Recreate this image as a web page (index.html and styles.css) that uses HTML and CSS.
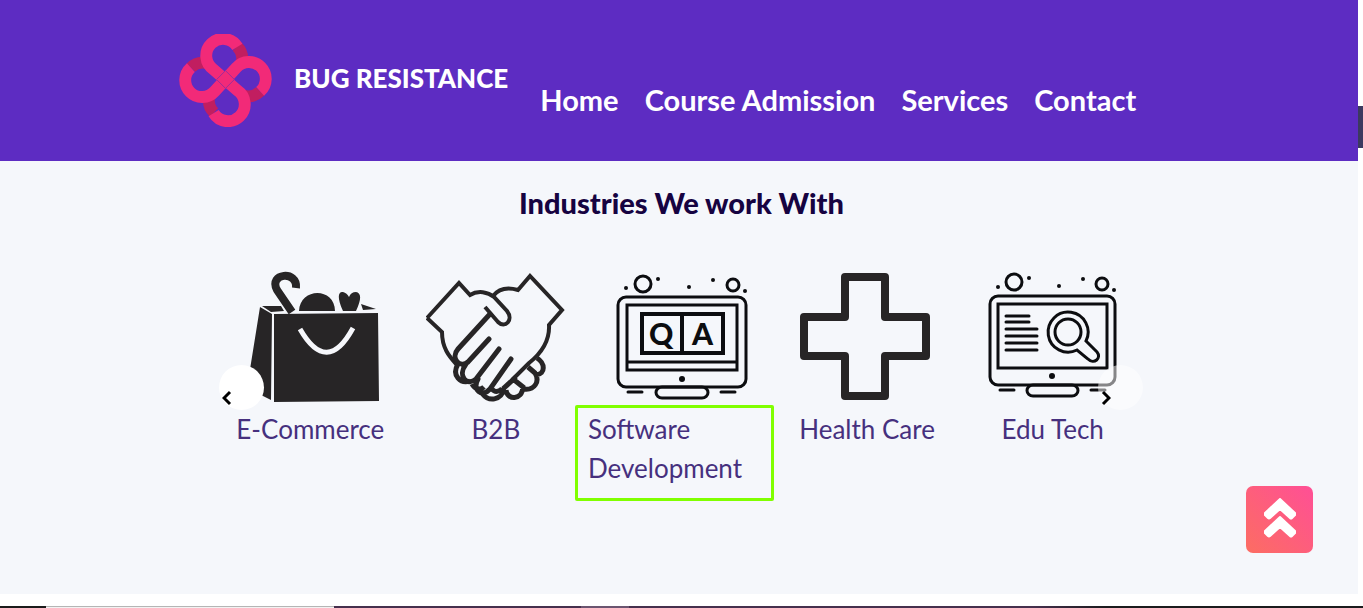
FILE: index.html
```html
<!DOCTYPE html>
<html lang="en">
<head>
<meta charset="utf-8">
<meta name="viewport" content="width=device-width, initial-scale=1">
<title>Bug Resistance</title>
<link rel="stylesheet" href="styles.css">
</head>
<body>
<div class="page">
  <header class="header">
    <div class="header-inner">
      <a class="brand" href="#">
        <svg class="brand-logo" viewBox="0 0 94 94" aria-hidden="true">
          <g fill="none" stroke-width="12">
            <path stroke="#c11e60" d="M58.5 12.5A17 17 0 0 1 63.5 28M35.5 79.5A17 17 0 0 1 30.5 64M12 34A17 17 0 0 1 28 29.5M82 58A17 17 0 0 1 66 62.5"/>
            <path stroke="#f22a78" d="M59 13A17 17 0 1 0 35 36L59 57A17 17 0 1 1 35 80"/>
            <path stroke="#f22a78" d="M82 58A17 17 0 1 0 58 34L36 58A17 17 0 1 1 12 34"/>
          </g>
          <path fill="none" stroke="#a02a9a" d="M38 46l9-9 9 9-9 9z"/>
        </svg>
        <span class="brand-name">BUG RESISTANCE</span>
      </a>
      <nav class="nav">
        <a href="#">Home</a>
        <a href="#">Course Admission</a>
        <a href="#">Services</a>
        <a href="#">Contact</a>
      </nav>
    </div>
  </header>

  <main class="industries">
    <h1 class="title">Industries We work With</h1>
    <div class="carousel">
      <ul class="slides">
        <li class="slide">
          <svg class="picture" viewBox="-4 -2 140 136" aria-hidden="true">
            <path fill="none" stroke="#272526" stroke-width="8" d="M48 39L33 17C24 0 54 -3 52 15"/>
            <path fill="#272526" d="M16 34l12 7-1 86L3 115zM18 33l19 0 3 5-13 1zM55 38C56 14 91 14 91 38zM99 38C92 23 95 18 99 19q4 1 6 5 2-5 7-5c5 1 6 6 0 19zM117 31l15 5-13 1zM30 41l104-1 1 88-105 1z"/>
            <path fill="none" stroke="#f6f7fb" stroke-width="5" d="M56 56Q83 103 109 55"/>
          </svg>
          <p class="label">E-Commerce</p>
        </li>
        <li class="slide">
          <svg class="picture" viewBox="2 -1 140 136" aria-hidden="true">
            <g fill="none" stroke="#272526" stroke-width="4">
              <path d="M3 46L35 11L46 23C54 18 64 20 70 25L83 39C90 48 81 57 74 50L61 35M69 24C76 15 87 16 94 18L106 4L138 38L125 53C126 71 115 83 105 91L88 108M3 46L18 60C18 77 26 85 33 93"/>
              <path stroke-width="5" stroke-linecap="round" d="M66 42L34 77C26 86 36 97 44 90L65 67M42 92C33 104 43 115 52 107L75 77M54 107C48 118 58 126 66 117L87 87"/>
              <path stroke-width="5" d="M34 92C27 104 37 112 46 109M48 112C51 118 57 118 60 115M57 119C63 132 79 128 80 116L92 105M82 118C83 128 98 129 99 115L89 107M99 117C111 119 116 109 111 101L104 95M112 103C122 102 121 91 113 86M68 117Q72 122 78 117"/>
            </g>
          </svg>
          <p class="label">B2B</p>
        </li>
        <li class="slide">
          <svg class="picture" viewBox="-3 -2 140 136" aria-hidden="true">
            <g fill="none" stroke="#0c0d10" stroke-width="3">
              <rect x="4" y="24" width="128" height="90" rx="8"/>
              <path d="M13 32h110v65H13zM13 89h110"/>
              <path stroke-width="4" d="M28 41h81v39H28zM68 41v39"/>
              <rect x="42" y="114" width="52" height="11" rx="6"/>
              <path stroke-linecap="round" d="M14 119h14M107 119h14"/>
              <circle cx="29" cy="11" r="8"/><circle cx="119" cy="12" r="6"/>
            </g>
            <g fill="#0c0d10"><circle cx="68" cy="106" r="3"/><circle cx="12" cy="15" r="2"/><circle cx="44" cy="6" r="2"/><circle cx="75" cy="14" r="2"/><circle cx="99" cy="7" r="2"/><circle cx="131" cy="18" r="2"/></g>
            <text class="qa" x="35" y="72">Q</text><text class="qa" x="78" y="72">A</text>
          </svg>
          <p class="label highlight">Software Development</p>
        </li>
        <li class="slide">
          <svg class="picture" viewBox="2 0 140 136" aria-hidden="true">
            <path fill="none" stroke="#272526" stroke-width="8" stroke-linejoin="round" d="M50 6h40v40h41v39H90v40H50V85H9V46h41z"/>
          </svg>
          <p class="label">Health Care</p>
        </li>
        <li class="slide">
          <svg class="picture" viewBox="2 -1 140 136" aria-hidden="true">
            <g fill="none" stroke="#0c0d10" stroke-width="3">
              <rect x="9" y="24" width="125" height="89" rx="8"/>
              <path d="M17 32h109v64H17z"/>
              <path stroke-linecap="round" d="M25 44h23M25 50h23M25 57h31M25 64h31M25 71h31M25 78h31M19 118h14M110 118h14"/>
              <path d="M96 78A20 20 0 1 1 105 69L116 80C121 86 113 93 107 87z"/>
              <circle cx="87" cy="60" r="13"/>
              <rect x="46" y="113" width="51" height="11" rx="6"/>
              <circle cx="33" cy="10" r="8"/><circle cx="121" cy="12" r="6"/>
            </g>
            <g fill="#0c0d10"><circle cx="71" cy="104" r="3"/><circle cx="17" cy="15" r="2"/><circle cx="48" cy="6" r="2"/><circle cx="78" cy="14" r="2"/><circle cx="102" cy="7" r="2"/><circle cx="133" cy="18" r="2"/></g>
          </svg>
          <p class="label">Edu Tech</p>
        </li>
      </ul>
      <button class="arrow arrow-prev" type="button" aria-label="Previous"><svg viewBox="0 0 10 16" aria-hidden="true"><path d="M8 2L2 8l6 6"/></svg></button>
      <button class="arrow arrow-next" type="button" aria-label="Next"><svg viewBox="0 0 10 16" aria-hidden="true"><path d="M2 2l6 6-6 6"/></svg></button>
    </div>
  </main>
  <div class="spacer"></div>
  <div class="strip"><span class="strip-start"></span><span class="strip-search"></span><span class="strip-tasks"></span><span class="strip-active"></span><span class="strip-tray"></span></div>

  <a class="to-top" href="#" aria-label="Back to top"><svg viewBox="0 0 32 40" aria-hidden="true"><path stroke-width="2" stroke="#fff" stroke-linejoin="round" d="M1 15L16 1l15 14q1 1 0 2l-3 3q-1 1-2 0L16 11 6 20q-1 1-2 0l-3-3q-1-1 0-2zM1 33l15-14 15 14q1 1 0 2l-3 3q-1 1-2 0L16 29 6 38q-1 1-2 0l-3-3q-1-1 0-2z"/></svg></a>
  <div class="scroll-track"><div class="scroll-thumb"></div></div>
</div>
</body>
</html>
```
FILE: styles.css
```css
* { box-sizing: border-box; }
body { margin: 0; font-family: Lato, "Open Sans", sans-serif; background: #fff; }
.page { position: relative; display: flex; flex-direction: column; min-height: 100vh; overflow: hidden; }
.header { background: #5d2cc2; padding: 34px 16px; }
.header-inner { display: flex; max-width: 1005px; margin: 0 auto; }
.brand { display: flex; align-items: center; gap: 22px; color: #fff; text-decoration: none; }
.brand-logo { width: 93px; height: 93px; }
.brand-name { font-size: 26px; line-height: 32px; font-weight: 900; padding-bottom: 6px; white-space: nowrap; }
.nav { display: flex; gap: 26px; align-items: center; padding-top: 38px; margin-left: 32px; }
.nav a { color: #fff; font-size: 29px; line-height: 36px; font-weight: 700; text-decoration: none; white-space: nowrap; }
.industries { flex: 1; background: #f5f7fb; padding: 24px 16px; }
.title { margin: 0 0 50px; text-align: center; color: #160341; font-size: 29px; line-height: 36px; font-weight: 900; }
.carousel { position: relative; max-width: 928px; margin: 0 auto; }
.slides { display: grid; grid-template-columns: repeat(5, 1fr); list-style: none; margin: 0; padding: 0; }
.slide { display: flex; flex-direction: column; align-items: center; min-width: 0; }
.picture { width: 140px; height: 136px; }
.qa { font: 900 30px Lato, sans-serif; fill: #0c0d10; }
.label { margin: 0; font-size: 26px; line-height: 39px; font-weight: 400; color: #46307e; padding-top: 3px; }
.highlight { width: 199px; margin: -2px 0 0 -14px; padding: 2px 10px 10px; border: 3px solid #80ff00; border-radius: 2px; }
.arrow { position: absolute; top: 94px; width: 45px; height: 45px; padding: 20px 0 0 3px; border: 0; border-radius: 50%; background: #fff; display: flex; align-items: center; }
.arrow svg { width: 10px; height: 16px; fill: none; stroke: #000; stroke-width: 3; }
.arrow-prev { left: 1px; }
.arrow-next { right: 3px; background: rgb(255 255 255 / 50%); }
.spacer { height: 12px; }
.strip { display: flex; height: 2px; }
.strip-start { width: 46px; background: #1b1b1b; }
.strip-search { width: 288px; background: #f2f2f2; border-top: 1px solid #b5b5b5; }
.strip-tasks { width: 247px; background: #46304d; }
.strip-active { width: 48px; background: #6b5570; }
.strip-tray { flex: 1; background: linear-gradient(90deg, #46304d 55%, #1b1b1d 65%); }
.to-top { position: absolute; right: 50px; bottom: 55px; display: flex; align-items: center; justify-content: center; width: 67px; height: 67px; padding-bottom: 4px; border-radius: 7px; background: linear-gradient(45deg, #fc6d62, #ff4f96); }
.to-top svg { width: 32px; height: 40px; fill: #fff; }
.scroll-track { position: absolute; top: 0; right: 0; bottom: 2px; width: 5px; padding-top: 106px; background: #fff; }
.scroll-thumb { height: 42px; background: #3c3a60; }
```
